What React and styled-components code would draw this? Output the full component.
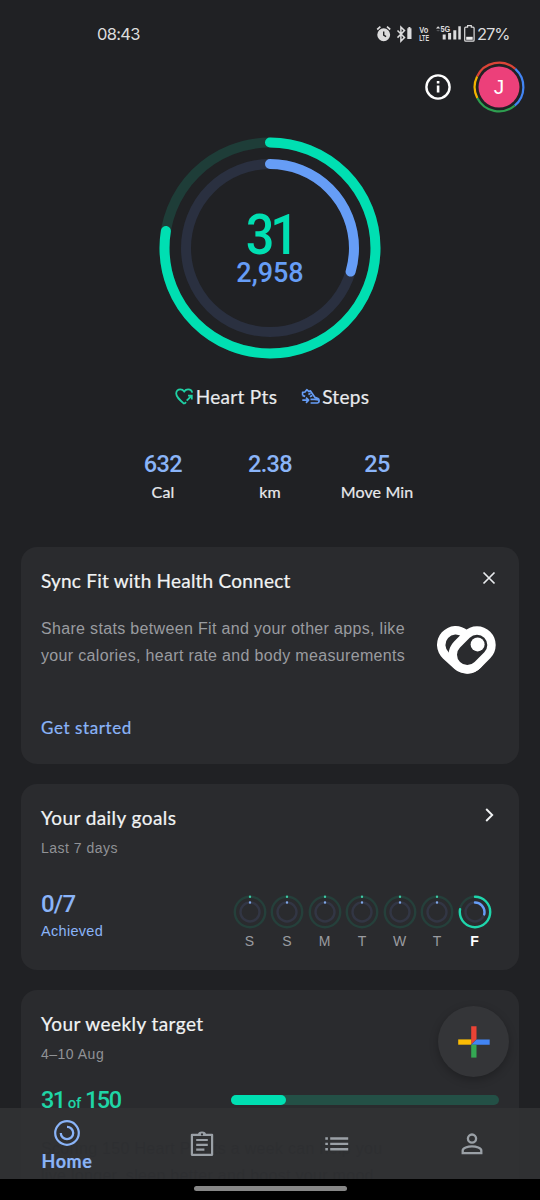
import React from "react";
import styled, { createGlobalStyle, css } from "styled-components";

const days = [
  { label: "S", heart: 0, steps: 0 },
  { label: "S", heart: 0, steps: 0 },
  { label: "M", heart: 0, steps: 0 },
  { label: "T", heart: 0, steps: 0 },
  { label: "W", heart: 0, steps: 0 },
  { label: "T", heart: 0, steps: 0 },
  { label: "F", heart: 0.775, steps: 0.29, today: true },
];

const stats = [
  { value: "632", label: "Cal" },
  { value: "2.38", label: "km" },
  { value: "25", label: "Move Min" },
];

const Arc = ({ c, r, width, value, color, track }) => {
  const length = 2 * Math.PI * r;
  return (
    <g fill="none" strokeWidth={width}>
      <circle cx={c} cy={c} r={r} stroke={track} />
      <circle
        cx={c}
        cy={c}
        r={r}
        stroke={color}
        strokeLinecap="round"
        strokeDasharray={`${Math.max(value * length, 0.01)} ${length}`}
        transform={`rotate(-90 ${c} ${c})`}
      />
    </g>
  );
};

const GoalRings = () => (
  <svg width="222" height="222" viewBox="0 0 222 222">
    <Arc c={111} r={105.5} width={10} value={0.775} color="#00dfb2" track="#1e3d38" />
    <Arc c={111} r={84} width={10} value={0.295} color="#669df6" track="#2a3040" />
  </svg>
);

const DayRings = ({ heart, steps, today }) => (
  <svg width="34" height="34" viewBox="0 0 34 34">
    <Arc c={17} r={15.2} width={2.4} value={heart} color={today ? "#1fd5ac" : "#3fc9a5"} track="#25403b" />
    <Arc c={17} r={9.5} width={2.4} value={steps} color={today ? "#669df6" : "#80a8e8"} track="#323644" />
  </svg>
);

const StatusIcons = () => (
  <svg width="100" height="20" viewBox="0 0 100 20">
    {/* alarm */}
    <g fill="none" stroke="#dcdcdd" strokeWidth="1.7">
      <circle cx="7.7" cy="10.8" r="5.6" fill="#dcdcdd" />
      <path d="M1.2 5.5 4.4 2.7M11 2.7l3.2 2.8" />
      <path d="M7.7 7.6v3.6l2.4 1.5" stroke="#202124" strokeWidth="1.4" />
    </g>
    {/* bluetooth */}
    <path d="m21.5 6.5 7 7-3.6 3.6V3l3.6 3.6-7 7" fill="none" stroke="#dcdcdd" strokeWidth="1.5" />
    <path d="M31.3 4.3h1.1V3h2v1.3h1.1V15h-4.2z" fill="#dcdcdd" />
    <g fill="#dcdcdd" fontFamily="Liberation Sans, sans-serif" fontWeight="700">
      <text x="43.3" y="9.2" fontSize="9.4" textLength="9" lengthAdjust="spacingAndGlyphs">Vo</text>
      <text x="43.2" y="16.6" fontSize="8.6" textLength="9.8" lengthAdjust="spacingAndGlyphs">LTE</text>
      <text x="64.4" y="8.2" fontSize="9" textLength="9.8" lengthAdjust="spacingAndGlyphs">5G</text>
    </g>
    <path d="m60 4.6 2.1-2.3 2.1 2.3z" fill="#dcdcdd" />
    <path d="m60.2 6 1.9 1.6L64 6z" fill="#55575a" />
    <path d="M66.7 10.6h3v4.9h-3zM72.1 9h3v6.5h-3zM77.3 6.2h3v9.3h-3zM82.3 2.3h2.5v13.2h-2.5z" fill="#dcdcdd" />
    <path d="M91.6 3.2V1.7h3.7v1.5h1.8q1 0 1 1v12q0 1-1 1h-7.4q-1 0-1-1v-12q0-1 1-1z" fill="none" stroke="#dcdcdd" strokeWidth="1.2" />
    <path d="M90.2 12.8h6.5v3h-6.5z" fill="#eee" />
  </svg>
);

const InfoIcon = () => (
  <svg width="28" height="28" viewBox="0 0 28 28">
    <circle cx="14" cy="14" r="11.6" fill="none" stroke="#fff" strokeWidth="2.4" />
    <path d="M12.8 12.4h2.6v7.2h-2.6zM12.8 8h2.6v2.6h-2.6z" fill="#fff" />
  </svg>
);

const AvatarRing = () => (
  <svg width="52" height="52" viewBox="0 0 52 52">
    <g fill="none" strokeWidth="2.2">
      <path d="M4.1 15.4A24.4 24.4 0 0 1 42.3 7.9" stroke="#db4437" />
      <path d="M42.3 7.9A24.4 24.4 0 0 1 41.7 44.7" stroke="#4285f4" />
      <path d="M41.7 44.7A24.4 24.4 0 0 1 4.3 37" stroke="#2e9e50" />
      <path d="M4.3 37A24.4 24.4 0 0 1 4.1 15.4" stroke="#f4b400" />
    </g>
    <circle cx="26" cy="26" r="20.5" fill="#ec407a" />
  </svg>
);

const HeartIcon = () => (
  <svg width="19" height="18" viewBox="0 0 19 18" fill="none" stroke="#1fd0a4" strokeWidth="1.8">
    <path d="M9.2 15.9C4.3 11.7 1.2 9 1.2 5.6 1.2 3 3.1 1.3 5.3 1.3c1.6 0 3 .8 3.9 2.1 1-1.3 2.3-2.1 3.9-2.1 2.1 0 3.8 1.4 4.1 3.4M9.2 15.9l1.9-1.8" />
    <path d="m11.7 12.6 4.8-4.8M13 7.6h3.8v3.9" />
  </svg>
);

const StepsIcon = () => (
  <svg width="19" height="18" viewBox="0 0 19 18" fill="none" stroke="#669df6" strokeWidth="1.7" strokeLinejoin="round">
    <path d="M1.6 7.6V4.4L4 4 5.8 1.7 8 3.6l1.3-.8L14 9.4l3 1.2c1.6.8 1.5 4.4-.6 4.4H9.6M1.6 7.6l2.6.8M9.5 11.4h4l3.9.6M7.4 6.6l2.2-1.3M9 8.8l2.2-1.3" />
    <path d="M1.3 12.2h6M5 9.6l2.6 2.6L5 14.8" />
  </svg>
);

const HealthConnectIcon = () => (
  <svg width="59" height="48" viewBox="0 0 59 48" strokeLinecap="round">
    <path d="M18.7 18.8 30 29" stroke="#fff" strokeWidth="37.4" />
    <path d="M18.7 18.8 30 29" stroke="#2a2b2e" strokeWidth="20.6" />
    <path d="M40 19l-9.7 9.7" stroke="#fff" strokeWidth="37.4" />
    <path d="M40 19l-9.7 9.7" stroke="#2a2b2e" strokeWidth="20.6" />
    <circle cx="40.6" cy="18.4" r="7" fill="#fff" />
  </svg>
);

const CloseIcon = () => (
  <svg width="14" height="14" viewBox="0 0 14 14">
    <path d="m1.5 1.5 11 11M12.5 1.5l-11 11" stroke="#e8eaed" strokeWidth="1.7" />
  </svg>
);

const ChevronIcon = () => (
  <svg width="12" height="14" viewBox="0 0 12 14">
    <path d="m2.2 1 6 6-6 6" fill="none" stroke="#f1f3f4" strokeWidth="1.9" />
  </svg>
);

const PlusIcon = () => (
  <svg width="32" height="32" viewBox="0 0 32 32">
    <path d="M13.2.3h5.3v13l-5.3 5.2z" fill="#ea4335" />
    <path d="M.2 13.4h13v5.3H.2z" fill="#fbbc04" />
    <path d="M18.5 13.4h13.2v5.3H13.2z" fill="#4285f4" />
    <path d="M13.2 18.7h5.3v12.9h-5.3z" fill="#34a853" />
  </svg>
);

const HomeIcon = () => (
  <svg width="26" height="26" viewBox="0 0 26 26" fill="none" stroke="#8ab4f8">
    <circle cx="13" cy="13" r="11.8" strokeWidth="2.2" />
    <path d="M13 6.8a6.2 6.2 0 1 1-6.2 6.2" strokeWidth="2.3" />
  </svg>
);

const JournalIcon = () => (
  <svg width="24" height="26" viewBox="0 0 24 26">
    <path d="M1.9 3.8h20.2v20H1.9z" fill="none" stroke="#9aa0a6" strokeWidth="2.2" strokeLinejoin="round" />
    <path d="M8 3.8a4 3.2 0 0 1 8 0z" fill="#9aa0a6" />
    <circle cx="12" cy="3.4" r="1.1" fill="#303134" />
    <path d="M6.2 9h11.6M6.2 13.8h11.6M6.2 18.6h8.2" stroke="#9aa0a6" strokeWidth="2.2" />
  </svg>
);

const BrowseIcon = () => (
  <svg width="24" height="14" viewBox="0 0 24 14">
    <path
      d="M.3.3h2.6v2.4H.3zM5.2.3h18v2.4h-18zM.3 5.7h2.6v2.4H.3zM5.2 5.7h18v2.4h-18zM.3 11.1h2.6v2.4H.3zM5.2 11.1h18v2.4h-18z"
      fill="#9aa0a6"
    />
  </svg>
);

const ProfileIcon = () => (
  <svg width="22" height="22" viewBox="0 0 22 22" fill="none" stroke="#9aa0a6" strokeWidth="2.3">
    <circle cx="11" cy="5.6" r="4.1" />
    <path d="M1.7 20.1v-2.6c0-2.4 5-4.2 9.3-4.2s9.3 1.8 9.3 4.2v2.6z" />
  </svg>
);

function App() {
  return (
    <Screen>
      <GlobalStyle />
      <StatusBar>
        <Clock>08:43</Clock>
        <StatusRight>
          <StatusIcons />
          <Battery>27%</Battery>
        </StatusRight>
      </StatusBar>

      <TopBar>
        <InfoIcon />
        <Avatar>
          <AvatarRing />
          <Initial>J</Initial>
        </Avatar>
      </TopBar>

      <Summary>
        <GoalRings />
        <Totals>
          <HeartTotal>31</HeartTotal>
          <StepTotal>2,958</StepTotal>
        </Totals>
      </Summary>

      <Legend>
        <LegendItem>
          <HeartIcon />
          <span>Heart Pts</span>
        </LegendItem>
        <LegendItem>
          <StepsIcon />
          <span>Steps</span>
        </LegendItem>
      </Legend>

      <Stats>
        {stats.map((stat) => (
          <Stat key={stat.label}>
            <StatValue>{stat.value}</StatValue>
            <StatLabel>{stat.label}</StatLabel>
          </Stat>
        ))}
      </Stats>

      <Cards>
        <Card $height={217}>
          <CardHeader>
            <CardTitle $spacing={0.22}>Sync Fit with Health Connect</CardTitle>
            <CloseIcon />
          </CardHeader>
          <SyncBody>
            <SyncText>
              Share stats between Fit and your other apps, like
              <br />
              your calories, heart rate and body measurements
            </SyncText>
            <HealthConnectIcon />
          </SyncBody>
          <GetStarted>Get started</GetStarted>
        </Card>

        <Card $height={186}>
          <CardHeader>
            <CardTitle>Your daily goals</CardTitle>
            <ChevronIcon />
          </CardHeader>
          <Subtitle>Last 7 days</Subtitle>
          <GoalsRow>
            <div>
              <GoalCount>0/7</GoalCount>
              <Achieved>Achieved</Achieved>
            </div>
            <Week>
              {days.map((day, index) => (
                <Day key={index} $today={day.today}>
                  <DayRings {...day} />
                  {day.label}
                </Day>
              ))}
            </Week>
          </GoalsRow>
        </Card>

        <Card $height={240}>
          <CardHeader>
            <CardTitle>Your weekly target</CardTitle>
          </CardHeader>
          <Subtitle>4–10 Aug</Subtitle>
          <TargetRow>
            <TargetCount>
              31<small>of</small>150
            </TargetCount>
            <Track>
              <Fill style={{ width: `${(31 / 150) * 100}%` }} />
            </Track>
          </TargetRow>
          <TargetText>
            Scoring 150 Heart Points a week can help you
            <br />
            live longer, sleep better and boost your mood
          </TargetText>
        </Card>
      </Cards>

      <Fab>
        <PlusIcon />
      </Fab>

      <Bottom>
        <Nav>
          <NavItem>
            <HomeIcon />
            <NavLabel>Home</NavLabel>
          </NavItem>
          <NavItem>
            <JournalIcon />
          </NavItem>
          <NavItem>
            <BrowseIcon />
          </NavItem>
          <NavItem>
            <ProfileIcon />
          </NavItem>
        </Nav>
        <GestureBar>
          <Handle />
        </GestureBar>
      </Bottom>
    </Screen>
  );
}

export default App;

const GlobalStyle = createGlobalStyle`
  * {
    box-sizing: border-box;
  }

  body {
    margin: 0;
    background: #202124;
  }

  svg {
    display: block;
    flex-shrink: 0;
  }
`;

/* Lato has no medium weight, a thin stroke stands in for it */
const display = css`
  font-family: Lato, "Liberation Sans", sans-serif;
  -webkit-text-stroke: 0.2px currentColor;
`;

const digits = css`
  font-family: Roboto, "Liberation Sans", sans-serif;
  font-weight: 500;
`;

const body = css`
  font-family: "Liberation Sans", Arial, sans-serif;
`;

const Screen = styled.div`
  ${body}
  position: relative;
  width: 540px;
  height: 1200px;
  overflow: hidden;
  background: #202124;
  color: #e8eaed;
`;

const StatusBar = styled.div`
  display: flex;
  justify-content: space-between;
  align-items: center;
  height: 50px;
  padding: 18px 31px 0 97px;
  font-family: Inter, "Liberation Sans", sans-serif;
  font-size: 16.5px;
  line-height: 32px;
  color: #dcdcdd;
`;

const Clock = styled.div`
  letter-spacing: -0.7px;
`;

const StatusRight = styled.div`
  display: flex;
  align-items: center;
  gap: 1px;
`;

const Battery = styled.div`
  width: 32px;
  letter-spacing: -1.1px;
`;

const TopBar = styled.div`
  display: flex;
  justify-content: flex-end;
  align-items: center;
  gap: 21px;
  height: 74px;
  padding-right: 15px;
`;

const Avatar = styled.div`
  display: grid;
  place-items: center;

  > * {
    grid-area: 1 / 1;
  }
`;

const Initial = styled.span`
  font-size: 21px;
  line-height: 24px;
  color: #fff;
`;

const Summary = styled.div`
  display: grid;
  place-items: center;
  margin-top: 13px;

  > * {
    grid-area: 1 / 1;
  }
`;

const Totals = styled.div`
  ${digits}
  display: flex;
  flex-direction: column;
  align-items: center;
`;

const HeartTotal = styled.div`
  font-size: 56px;
  letter-spacing: -4.5px;
  line-height: 49px;
  color: #00dfb2;
  transform: scaleX(0.9);
`;

const StepTotal = styled.div`
  font-size: 27px;
  line-height: 26px;
  color: #669df6;
`;

const Legend = styled.div`
  ${display}
  display: flex;
  justify-content: center;
  gap: 24px;
  margin-top: 24px;
  padding-left: 4px;
  font-size: 19px;
  letter-spacing: 0.3px;
  line-height: 28px;
`;

const LegendItem = styled.div`
  display: flex;
  align-items: center;
  gap: 2px;
`;

const Stats = styled.div`
  display: grid;
  grid-template-columns: repeat(3, 107px);
  justify-content: center;
  margin-top: 37px;
  text-align: center;
`;

const Stat = styled.div`
  display: flex;
  flex-direction: column;
`;

const StatValue = styled.div`
  ${digits}
  font-size: 23.5px;
  letter-spacing: -0.6px;
  line-height: 32px;
  color: #8ab4f8;
`;

const StatLabel = styled.div`
  ${display}
  font-size: 16px;
  letter-spacing: 0.15px;
  line-height: 24px;
`;

const Cards = styled.div`
  display: flex;
  flex-direction: column;
  gap: 20px;
  margin-top: 43px;
  padding: 0 21px;
`;

const Card = styled.section`
  height: ${({ $height }) => $height}px;
  flex-shrink: 0;
  padding: 20px;
  border-radius: 16px;
  background: #2a2b2e;
`;

const CardHeader = styled.div`
  display: flex;
  justify-content: space-between;
  align-items: flex-start;
  height: 28px;
  padding-right: 3px;

  svg {
    margin-top: 4px;
  }
`;

const CardTitle = styled.h2`
  ${display}
  margin: 0;
  font-size: 19px;
  font-weight: 400;
  letter-spacing: ${({ $spacing = 0.43 }) => $spacing}px;
  line-height: 28px;
  color: #f1f3f4;
`;

const SyncBody = styled.div`
  display: flex;
  justify-content: space-between;
  margin-top: 21px;
  padding-right: 3px;

  svg {
    margin-top: 10px;
  }
`;

const SyncText = styled.p`
  margin: 0;
  font-size: 16px;
  letter-spacing: 0.33px;
  line-height: 26.5px;
  color: #9a9ca0;
  white-space: nowrap;
`;

const GetStarted = styled.div`
  ${display}
  margin-top: 38px;
  padding-top: 4px;
  font-size: 17px;
  letter-spacing: 0.6px;
  line-height: 24px;
  color: #8ab4f8;
`;

const Subtitle = styled.div`
  margin-top: 6px;
  font-size: 14px;
  letter-spacing: 0.5px;
  line-height: 20px;
  color: #909296;
`;

const GoalsRow = styled.div`
  display: flex;
  justify-content: space-between;
  margin-top: 32px;
  padding-right: 7.5px;
`;

const GoalCount = styled.div`
  ${digits}
  font-size: 24px;
  letter-spacing: -0.8px;
  line-height: 28px;
  color: #8ab4f8;
`;

const Achieved = styled.div`
  font-size: 14.5px;
  letter-spacing: 0.3px;
  line-height: 26px;
  color: #8ab4f8;
`;

const Week = styled.div`
  display: flex;
  gap: 3.5px;
  padding-top: 4.5px;
`;

const Day = styled.div`
  display: flex;
  flex-direction: column;
  align-items: center;
  width: 34px;
  font-size: 14px;
  font-weight: ${({ $today }) => ($today ? 700 : 400)};
  line-height: 24px;
  color: ${({ $today }) => ($today ? "#fff" : "#9a9ca0")};
`;

const TargetRow = styled.div`
  display: flex;
  justify-content: space-between;
  align-items: center;
  height: 32px;
  margin-top: 20px;
`;

const TargetCount = styled.div`
  ${digits}
  padding-top: 2px;
  font-size: 23.5px;
  letter-spacing: -1.5px;
  line-height: 32px;
  color: #1fd5a6;

  small {
    margin: 0 4px 0 3px;
    font-size: 15px;
    letter-spacing: -0.3px;
  }
`;

const Track = styled.div`
  width: 268px;
  height: 10px;
  border-radius: 5px;
  background: #235046;
`;

const Fill = styled.div`
  height: 10px;
  border-radius: 5px;
  background: #00dfb2;
`;

const TargetText = styled.p`
  margin: 20px 0 0;
  font-size: 16px;
  letter-spacing: 0.3px;
  line-height: 26.5px;
  color: #0c0d0f;
`;

const Fab = styled.div`
  position: absolute;
  top: 1006px;
  left: 438px;
  display: grid;
  place-items: center;
  width: 71px;
  height: 71px;
  border-radius: 50%;
  background: #343538;
  box-shadow: 0 3px 8px rgba(0, 0, 0, 0.25);
`;

const Bottom = styled.div`
  position: absolute;
  right: 0;
  bottom: 0;
  left: 0;
`;

const Nav = styled.nav`
  display: grid;
  grid-template-columns: repeat(4, 135px);
  height: 71px;
  padding-top: 1px;
  background: rgba(48, 49, 52, 0.93);
`;

const NavItem = styled.div`
  display: flex;
  flex-direction: column;
  justify-content: center;
  align-items: center;
  padding-right: 1px;
`;

const NavLabel = styled.span`
  ${display}
  margin: 3px 0 -5px;
  font-size: 18px;
  font-weight: 700;
  letter-spacing: 0.6px;
  line-height: 24px;
  color: #8ab4f8;
`;

const GestureBar = styled.div`
  display: flex;
  justify-content: center;
  height: 21px;
  padding-top: 7px;
  background: #000;
`;

const Handle = styled.div`
  width: 153px;
  height: 5px;
  border-radius: 3px;
  background: #868686;
`;
